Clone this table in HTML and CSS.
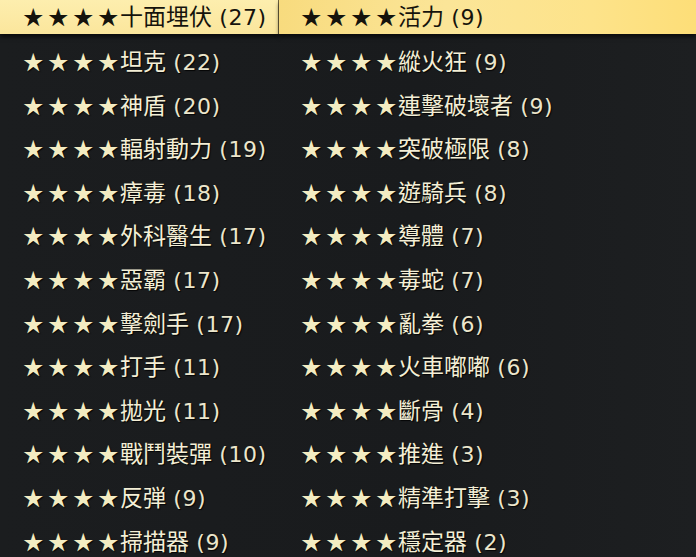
FILE: index.html
```html
<!DOCTYPE html>
<html lang="zh-Hant">
<head>
<meta charset="utf-8">
<link rel="stylesheet" href="styles.css">
</head>
<body>
<div class="board">
  <div class="col left">
    <div class="row sel"><span class="stars">★★★★</span>十面埋伏 <span class="n">(27)</span></div>
    <div class="row"><span class="stars">★★★★</span>坦克 <span class="n">(22)</span></div>
    <div class="row"><span class="stars">★★★★</span>神盾 <span class="n">(20)</span></div>
    <div class="row"><span class="stars">★★★★</span>輻射動力 <span class="n">(19)</span></div>
    <div class="row"><span class="stars">★★★★</span>瘴毒 <span class="n">(18)</span></div>
    <div class="row"><span class="stars">★★★★</span>外科醫生 <span class="n">(17)</span></div>
    <div class="row"><span class="stars">★★★★</span>惡霸 <span class="n">(17)</span></div>
    <div class="row"><span class="stars">★★★★</span>擊劍手 <span class="n">(17)</span></div>
    <div class="row"><span class="stars">★★★★</span>打手 <span class="n">(11)</span></div>
    <div class="row"><span class="stars">★★★★</span>拋光 <span class="n">(11)</span></div>
    <div class="row"><span class="stars">★★★★</span>戰鬥裝彈 <span class="n">(10)</span></div>
    <div class="row"><span class="stars">★★★★</span>反弾 <span class="n">(9)</span></div>
    <div class="row"><span class="stars">★★★★</span>掃描器 <span class="n">(9)</span></div>
  </div>
  <div class="col right">
    <div class="row sel"><span class="stars">★★★★</span>活力 <span class="n">(9)</span></div>
    <div class="row"><span class="stars">★★★★</span>縱火狂 <span class="n">(9)</span></div>
    <div class="row"><span class="stars">★★★★</span>連擊破壞者 <span class="n">(9)</span></div>
    <div class="row"><span class="stars">★★★★</span>突破極限 <span class="n">(8)</span></div>
    <div class="row"><span class="stars">★★★★</span>遊騎兵 <span class="n">(8)</span></div>
    <div class="row"><span class="stars">★★★★</span>導體 <span class="n">(7)</span></div>
    <div class="row"><span class="stars">★★★★</span>毒蛇 <span class="n">(7)</span></div>
    <div class="row"><span class="stars">★★★★</span>亂拳 <span class="n">(6)</span></div>
    <div class="row"><span class="stars">★★★★</span>火車嘟嘟 <span class="n">(6)</span></div>
    <div class="row"><span class="stars">★★★★</span>斷骨 <span class="n">(4)</span></div>
    <div class="row"><span class="stars">★★★★</span>推進 <span class="n">(3)</span></div>
    <div class="row"><span class="stars">★★★★</span>精準打擊 <span class="n">(3)</span></div>
    <div class="row"><span class="stars">★★★★</span>穩定器 <span class="n">(2)</span></div>
  </div>
</div>
</body>
</html>
```
FILE: styles.css
```css
html, body {
  margin: 0;
  padding: 0;
}
body {
  width: 696px;
  height: 557px;
  overflow: hidden;
  background: #1a1c1e;
  font-family: "DejaVu Sans", "Noto Sans CJK TC", "Noto Sans CJK JP", sans-serif;
}
.board {
  display: grid;
  grid-template-columns: 279px 1fr;
  height: 557px;
  background: linear-gradient(90deg, #1b1d1f 0%, #191b1d 60%, #1d1f21 100%);
}
.col {
  display: flex;
  flex-direction: column;
}
.row {
  height: 43.6px;
  line-height: 43.6px;
  flex: none;
  font-size: 23px;
  color: #f4efd6;
  white-space: pre;
  text-shadow: 1px 1px 1px rgba(0,0,0,0.85);
}
.n {
  font-size: 22px;
  letter-spacing: 0.5px;
  color: #ece6cc;
}
.left .row { padding-left: 23px; }
.right .row { padding-left: 22px; }
.row.sel {
  height: 34px;
  line-height: 33px;
  margin-bottom: 6px;
  color: #15130c;
  text-shadow: none;
  box-shadow: 0 3px 4px rgba(0,0,0,0.6);
}
.sel .n { color: #15130c; }
.left .row.sel {
  background: linear-gradient(180deg, #fdeeae 0%, #fbe69c 100%);
  border-right: 1px solid #6f6340;
}
.right .row.sel {
  background: linear-gradient(90deg, #f8db7e 0%, #fbe598 40%, #fde38a 75%, #fdde78 100%);
}
.stars {
  font-family: "Noto Sans CJK TC", sans-serif;
  color: #f3ecc2;
  font-size: 20.5px;
  letter-spacing: 4.5px;
  margin-right: -3px;
}
.sel .stars { color: #15130c; }
```
